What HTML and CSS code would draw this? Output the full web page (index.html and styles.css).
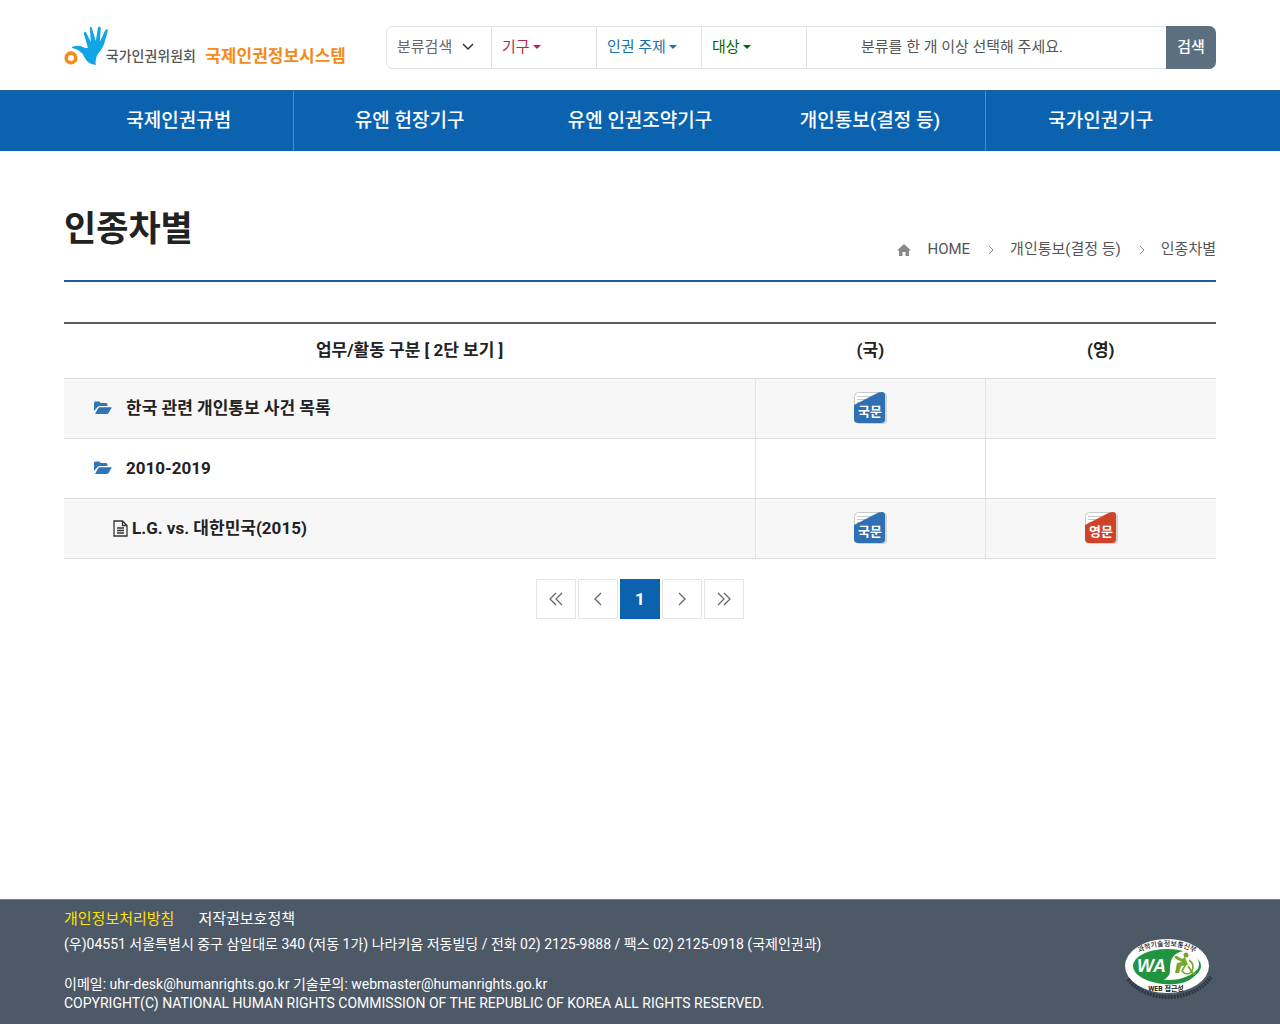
FILE: index.html
```html
<!DOCTYPE html>
<html lang="ko">
<head>
<meta charset="utf-8">
<meta name="viewport" content="width=device-width, initial-scale=1">
<title>인종차별 - 국제인권정보시스템</title>
<link rel="stylesheet" href="styles.css">
</head>
<body>
<svg class="defs" aria-hidden="true">
  <symbol id="folder" viewBox="0 0 18 14"><path d="M0 10V2Q0 .5 1.500 .5H5Q6.500.5 6.500 2H12Q13.500 2 13.500 4V5H6Q4.500 5 3.500 6Z"/><path d="M1 13L4.300 7Q4.700 6.200 5.700 6.200H17.300Q18 6.200 17.500 7L14.500 12Q13.900 13 13 13Z"/></symbol>
  <symbol id="lang-doc" viewBox="0 0 34 34">
    <rect x="3" y="2" width="31" height="31" rx="4" fill="#000" opacity=".15"/>
    <rect x="1.500" y="1.500" width="30" height="30" rx="4" fill="#fff" stroke="#c8ccc8"/>
    <path d="M4 5.500H19M4 8.500H14M4 11.500H9" stroke="#c9c9c9"/>
    <path d="M1 14L25 1.800Q27 1 29 1Q32 1 32 4V28Q32 32 28 32H5Q1 32 1 28Z" fill="currentColor"/>
  </symbol>
</svg>
<header class="header wrap">
  <a class="logo" href="#">
    <svg class="logo-mark" viewBox="0 0 46 40" aria-hidden="true">
      <circle cx="7" cy="32" r="4.800" fill="none" stroke="#f58a1f" stroke-width="3.600"/>
      <path fill="#12a5e5" d="M8 21Q15 18 21 22L24 22Q22 14 20 8Q20 4 22 6L27 16L26 3Q26-1 28 2L32 15L34 2Q36-1 37 2L36 16L41 5Q44 1 44 5L40 19Q37 25 34 28Q31 33 32 39Q24 38 21 32Q18 24 8 22Z"/>
    </svg>
    <span class="logo-org">국가인권위원회</span>
    <span class="logo-name">국제인권정보시스템</span>
  </a>
  <form class="search">
    <div class="search-kind">
      <select aria-label="분류검색"><option>분류검색</option></select>
      <svg viewBox="0 0 12 8" aria-hidden="true"><path d="M1 1L6 6L11 1"/></svg>
    </div>
    <button type="button" class="filter filter-org">기구<i class="caret"></i></button>
    <button type="button" class="filter filter-topic">인권 주제<i class="caret"></i></button>
    <button type="button" class="filter filter-target">대상<i class="caret"></i></button>
    <div class="search-message">분류를 한 개 이상 선택해 주세요.</div>
    <button type="submit" class="search-submit">검색</button>
  </form>
</header>
<nav class="nav">
  <ul class="nav-list wrap">
    <li class="divided"><a href="#">국제인권규범</a></li>
    <li><a href="#">유엔 헌장기구</a></li>
    <li><a href="#">유엔 인권조약기구</a></li>
    <li class="divided"><a href="#">개인통보(결정 등)</a></li>
    <li><a href="#">국가인권기구</a></li>
  </ul>
</nav>
<main class="main wrap">
  <div class="page-head">
    <h1>인종차별</h1>
    <div class="crumbs">
      <a href="#"><svg class="home" viewBox="0 0 14 12" aria-hidden="true"><path d="M7 0L14 6.500H12V12H8.500V8H5.500V12H2V6.500H0Z"/></svg>HOME</a>
      <svg class="sep" viewBox="0 0 6 8" aria-hidden="true"><path d="M1 0L5 4L1 8"/></svg>
      <a href="#">개인통보(결정 등)</a>
      <svg class="sep" viewBox="0 0 6 8" aria-hidden="true"><path d="M1 0L5 4L1 8"/></svg>
      <span>인종차별</span>
    </div>
  </div>
  <table class="cases">
    <thead>
      <tr><th class="col-name" scope="col">업무/활동 구분 <a href="#">[ 2단 보기 ]</a></th><th scope="col">(국)</th><th scope="col">(영)</th></tr>
    </thead>
    <tbody>
      <tr>
        <td><a class="folder" href="#"><svg viewBox="0 0 18 14" aria-hidden="true"><use href="#folder"/></svg>한국 관련 개인통보 사건 목록</a></td>
        <td><a class="doc doc-ko" href="#"><svg viewBox="0 0 34 34"><use href="#lang-doc"/><text x="17" y="25">국문</text></svg></a></td>
        <td></td>
      </tr>
      <tr>
        <td><a class="folder" href="#"><svg viewBox="0 0 18 14" aria-hidden="true"><use href="#folder"/></svg>2010-2019</a></td>
        <td></td>
        <td></td>
      </tr>
      <tr>
        <td><a class="file" href="#"><svg viewBox="0 0 15 17" aria-hidden="true"><path d="M1 1H9.500L14 5.500V16H1ZM9.500 1V5.500H14M4 8H11M4 10.500H11M4 13H11"/></svg>L.G. vs. 대한민국(2015)</a></td>
        <td><a class="doc doc-ko" href="#"><svg viewBox="0 0 34 34"><use href="#lang-doc"/><text x="17" y="25">국문</text></svg></a></td>
        <td><a class="doc doc-en" href="#"><svg viewBox="0 0 34 34"><use href="#lang-doc"/><text x="17" y="25">영문</text></svg></a></td>
      </tr>
    </tbody>
  </table>
  <nav class="pager" aria-label="페이지">
    <a href="#" aria-label="처음"><svg viewBox="0 0 16 14"><path d="M8 1L2 7L8 13M14 1L8 7L14 13"/></svg></a>
    <a href="#" aria-label="이전"><svg viewBox="0 0 16 14"><path d="M11 1L5 7L11 13"/></svg></a>
    <a href="#" class="current" aria-current="page">1</a>
    <a href="#" aria-label="다음"><svg viewBox="0 0 16 14"><path d="M5 1L11 7L5 13"/></svg></a>
    <a href="#" aria-label="마지막"><svg viewBox="0 0 16 14"><path d="M2 1L8 7L2 13M8 1L14 7L8 13"/></svg></a>
  </nav>
</main>
<footer class="footer">
  <div class="footer-inner wrap">
    <div>
      <div class="footer-links"><a class="privacy" href="#">개인정보처리방침</a><a href="#">저작권보호정책</a></div>
      <p>(우)04551 서울특별시 중구 삼일대로 340 (저동 1가) 나라키움 저동빌딩 / 전화 02) 2125-9888 / 팩스 02) 2125-0918 (국제인권과)</p>
      <p class="contact">이메일: uhr-desk@humanrights.go.kr 기술문의: webmaster@humanrights.go.kr<br>COPYRIGHT(C) NATIONAL HUMAN RIGHTS COMMISSION OF THE REPUBLIC OF KOREA ALL RIGHTS RESERVED.</p>
    </div>
    <a class="wa" href="#">
      <svg viewBox="0 0 90 64">
        <path d="M3 42Q18 61 48 60Q74 57 86 40" fill="none" stroke="#2c3744" stroke-width="4" stroke-dasharray="2 1"/>
        <ellipse cx="42" cy="29" rx="42" ry="27" fill="#fff"/>
        <ellipse cx="42" cy="29" rx="34" ry="17" fill="#219341"/>
        <path d="M36 44Q46 41 45 31Q45 16 59 14Q74 15 74 28Q72 42 52 44Z" fill="#fff"/>
        <path d="M9 33Q16 41 32 42Q60 47 76 29Q68 50 38 47Q15 44 9 33Z" fill="#219341"/>
        <circle cx="61" cy="18" r="2.500" fill="#75a82a"/>
        <path d="M60 20L63 28L56 29L54 36L50 36L52 26L57 25L51 22L49 19L52 19L57 22Z" fill="#75a82a"/>
        <path d="M64 23Q70 27 67 34Q62 40 57 34L61 27M63 29L68 37L71 36" fill="none" stroke="#75a82a" stroke-width="1.600"/>
        <text class="wa-name" x="12" y="35">WA</text>
        <text class="wa-label" x="41" y="54">WEB 접근성</text>
        <path id="wa-arc" d="M9 18Q42 0 75 18" fill="none"/>
        <text class="wa-org"><textPath href="#wa-arc" startOffset="50%">과학기술정보통신부</textPath></text>
      </svg>
    </a>
  </div>
</footer>
</body>
</html>
```
FILE: styles.css
```css
* { box-sizing: border-box; }
body {
  margin: 0;
  min-height: 100vh;
  display: flex;
  flex-direction: column;
  background: #fff;
  color: #222;
  font: 15px/24px Roboto, "Noto Sans CJK KR", sans-serif;
}
a { color: inherit; text-decoration: none; }
button, select { font: inherit; }
.defs { display: none; }
.wrap { width: 90%; margin: 0 auto; }

.header { display: flex; align-items: center; gap: 40px; height: 90px; padding-top: 4px; }
.logo { display: flex; align-items: flex-start; flex: none; width: 282px; white-space: nowrap; }
.logo-mark { width: 46px; height: 40px; margin-right: -4px; }
.logo-org, .logo-name { padding-top: 18px; }
.logo-org { width: 100px; font-size: 14px; font-weight: 500; color: #555; }
.logo-name { font-size: 17px; font-weight: 700; color: #f28a1c; }

.search { display: flex; flex: 1; height: 43px; border: 1px solid #dee2e6; border-radius: 7px; line-height: 40px; }
.search-kind, .filter { flex: 0 0 105px; border: 0; border-right: 1px solid #dee2e6; }
.search-kind { display: flex; align-items: center; padding-right: 17px; }
.search-kind select { flex: 1; min-width: 0; height: 40px; padding: 0 0 0 10px; border: 0; background: none; color: #666; appearance: none; line-height: 24px; }
.search-kind svg { width: 12px; height: 8px; fill: none; stroke: #333; stroke-width: 1.5; }
.filter { display: flex; align-items: center; gap: 3px; padding: 0 0 0 10px; background: none; }
.filter-org { color: #b02a4c; }
.filter-topic { color: #1a73aa; }
.filter-target { color: #006400; }
.caret { border: 4px solid transparent; border-top-color: currentColor; border-bottom: 0; }
.search-message { flex: 1; padding-right: 50px; text-align: center; color: #555; }
.search-submit { width: 50px; margin: -1px; padding: 0; border: 0; border-radius: 0 7px 7px 0; background: #5c6f80; color: #fff; font-weight: 500; }

.nav { background: #0b63af; border-top: 1px solid #24658f; }
.nav-list { display: grid; grid-template-columns: repeat(5, 1fr); padding: 0; list-style: none; }
.nav-list a { display: block; color: #fff; font-size: 19px; font-weight: 500; line-height: 60px; text-align: center; }
.divided { border-right: 1px solid #4a8dcb; }

.main { flex: 1; }
.page-head { display: flex; justify-content: space-between; align-items: flex-end; height: 131px; padding-bottom: 19px; border-bottom: 2px solid #1f5c9f; }
h1 { margin: 0 0 6px; font-size: 35px; line-height: 50px; }
.crumbs { display: flex; align-items: center; color: #555; }
.home { width: 14px; height: 12px; margin-right: 16px; vertical-align: -2px; fill: #888; }
.sep { width: 6px; height: 8px; margin: 2px 16px 0 18px; fill: none; stroke: #888; }

.cases { width: 100%; margin-top: 40px; border-collapse: collapse; table-layout: fixed; font-size: 17px; border-top: 2px solid #5c5c5c; }
.cases th { height: 55px; padding: 0 0 2px; color: #222; }
.col-name { width: 60%; }
.cases td { height: 60px; padding: 0; border: solid #d9d9d9; border-width: 1px 0; font-weight: 700; }
.cases td + td { border-left: 1px solid #e3e3e3; text-align: center; }
.cases tbody tr:nth-child(odd) { background: #f7f7f7; }
.folder, .file { display: flex; align-items: center; }
.folder { gap: 14px; padding-left: 30px; }
.folder svg { width: 18px; height: 14px; fill: #2e76b8; }
.file { gap: 4px; padding-left: 49px; }
.file svg { width: 15px; height: 17px; fill: none; stroke: #333; stroke-width: 1.3; }
.doc svg { display: block; width: 34px; height: 34px; margin: 0 auto; }
.doc text { fill: #fff; font-size: 13px; font-weight: 700; text-anchor: middle; }
.doc-ko { color: #2f70b4; }
.doc-en { color: #cf4328; }

.pager { display: flex; justify-content: center; gap: 2px; margin: 20px 0; }
.pager a { display: grid; place-items: center; width: 40px; height: 40px; border: 1px solid #e5e5e5; font-size: 17px; }
.pager svg { width: 16px; height: 14px; fill: none; stroke: #666; stroke-width: 1.3; }
.pager .current { border-color: #0b63af; background: #0b63af; color: #fff; font-weight: 700; }

.footer { background: #4e5967; border-top: 1px solid #747b86; color: #fff; font-size: 14px; line-height: 19px; }
.footer-inner { display: flex; justify-content: space-between; align-items: center; padding: 8px 0 11px; }
.footer p { margin: 0; }
.footer .contact { margin-top: 21px; }
.footer-links { display: flex; gap: 24px; margin-bottom: 4px; font-size: 15px; line-height: 23px; }
.privacy { color: #ffe100; }
.wa svg { display: block; width: 90px; height: 64px; margin: 16px 1px 0 0; }
.wa-name { fill: #fff; font: italic 700 18px "Liberation Sans", sans-serif; }
.wa-label { fill: #222; font-size: 7px; font-weight: 700; text-anchor: middle; }
.wa-org { fill: #222; font-size: 7px; font-weight: 500; text-anchor: middle; }
```
